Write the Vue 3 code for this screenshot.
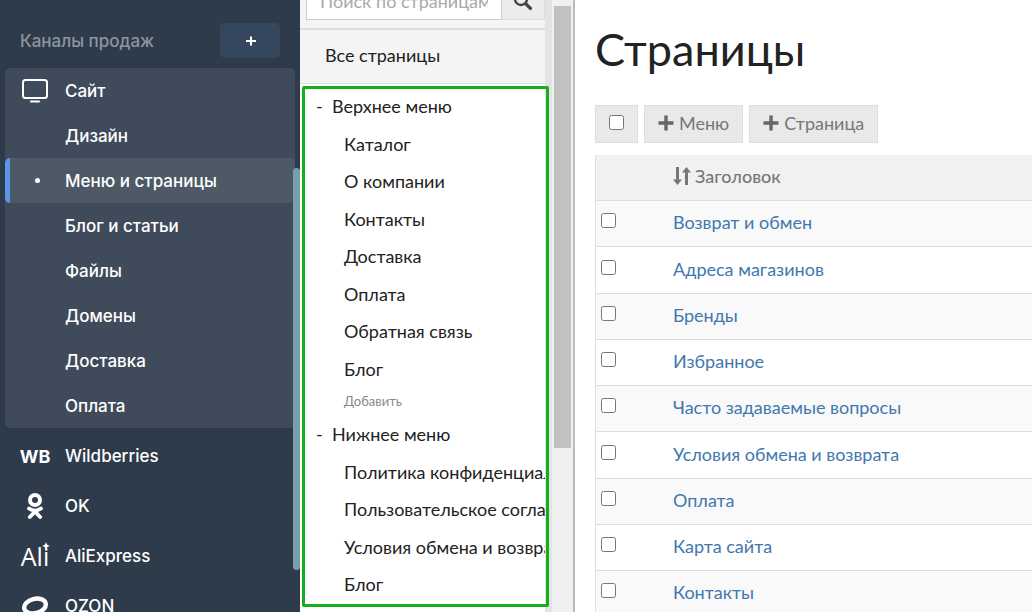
<script setup>
import { ref } from 'vue'

const query = ref('')
const siteItems = ['Дизайн', 'Меню и страницы', 'Блог и статьи', 'Файлы', 'Домены', 'Доставка', 'Оплата']
const activeItem = 'Меню и страницы'

const menus = [
  {
    title: 'Верхнее меню',
    items: ['Каталог', 'О компании', 'Контакты', 'Доставка', 'Оплата', 'Обратная связь', 'Блог'],
    canAdd: true,
  },
  {
    title: 'Нижнее меню',
    items: ['Политика конфиденциальности', 'Пользовательское соглашение', 'Условия обмена и возврата', 'Блог'],
    canAdd: false,
  },
]

const pages = [
  'Возврат и обмен',
  'Адреса магазинов',
  'Бренды',
  'Избранное',
  'Часто задаваемые вопросы',
  'Условия обмена и возврата',
  'Оплата',
  'Карта сайта',
  'Контакты',
]
</script>

<template>
  <div class="app">
    <nav class="sidebar" aria-label="Каналы продаж">
      <div class="sidebar-head">
        <span class="sidebar-title">Каналы продаж</span>
        <button class="add-channel" type="button" aria-label="Добавить канал">
          <svg width="10" height="10" viewBox="0 0 10 10"><path d="M5 0.5V9.5M0 5H10" stroke="#fff" stroke-width="2" /></svg>
        </button>
      </div>

      <div class="site-card">
        <a class="site-link" href="#">
          <span class="link-icon">
            <svg width="26" height="24" viewBox="0 0 26 24" fill="none" stroke="#fff">
              <rect x="1" y="1" width="24" height="18" rx="2.5" stroke-width="2" />
              <path d="M9 22.5H17" stroke-width="2" stroke-linecap="round" />
            </svg>
          </span>
          <span>Сайт</span>
        </a>
        <a v-for="item in siteItems" :key="item" href="#" class="site-link" :class="{ active: item === activeItem }">
          <span class="link-icon"><span v-if="item === activeItem" class="dot"></span></span>
          <span>{{ item }}</span>
        </a>
      </div>

      <div class="channels">
        <a class="channel" href="#">
          <span class="link-icon wb">WB</span>
          <span>Wildberries</span>
        </a>
        <a class="channel" href="#">
          <span class="link-icon">
            <svg width="16" height="26" viewBox="0 0 16 26" fill="none" stroke="#fff" stroke-linecap="round" stroke-linejoin="round">
              <circle cx="8" cy="7" r="5" stroke-width="4" />
              <path d="M2 15.5C5.5 18 10.5 18 14 15.5" stroke-width="3.8" />
              <path d="M2.8 24L8 18.7L13.2 24" stroke-width="3.8" />
            </svg>
          </span>
          <span>OK</span>
        </a>
        <a class="channel" href="#">
          <span class="link-icon ali">
            Ali
            <svg class="spark" width="8" height="8" viewBox="0 0 8 8"><path d="M4 0Q4.6 3.4 8 4Q4.6 4.6 4 8Q3.4 4.6 0 4Q3.4 3.4 4 0Z" fill="#fff" /></svg>
          </span>
          <span>AliExpress</span>
        </a>
        <a class="channel" href="#">
          <span class="link-icon">
            <svg width="28" height="20" viewBox="0 0 28 20"><ellipse cx="14" cy="10" rx="11" ry="7.2" transform="rotate(-14 14 10)" fill="none" stroke="#fff" stroke-width="4.4" /></svg>
          </span>
          <span>OZON</span>
        </a>
      </div>
      <div class="sidebar-thumb"></div>
    </nav>

    <aside class="tree-panel">
      <div class="tree">
        <form class="search" @submit.prevent>
          <input v-model="query" type="text" placeholder="Поиск по страницам" aria-label="Поиск по страницам" />
          <button type="submit" aria-label="Найти">
            <svg width="20" height="20" viewBox="0 0 20 20" fill="none" stroke="#444">
              <circle cx="8" cy="8" r="6" stroke-width="2.4" />
              <path d="M12.6 12.6L17.4 17.4" stroke-width="3.4" stroke-linecap="round" />
            </svg>
          </button>
        </form>
        <a class="all-pages" href="#">Все страницы</a>

        <div class="menus">
          <section v-for="menu in menus" :key="menu.title" class="menu">
            <button class="menu-title" type="button"><span class="toggle">-</span>{{ menu.title }}</button>
            <ul>
              <li v-for="item in menu.items" :key="item"><a href="#">{{ item }}</a></li>
            </ul>
            <a v-if="menu.canAdd" class="add-item" href="#">Добавить</a>
          </section>
        </div>
      </div>
      <div class="gutter"></div>
      <div class="scroll-track"><div class="scroll-thumb"></div></div>
      <div class="menus-frame"></div>
    </aside>

    <main class="content">
      <h1>Страницы</h1>
      <div class="toolbar">
        <label class="tool select-all"><input type="checkbox" aria-label="Выбрать все" /></label>
        <button v-for="label in ['Меню', 'Страница']" :key="label" class="tool" type="button">
          <svg width="16" height="16" viewBox="0 0 16 16"><path d="M8 0.5V15.5M0.5 8H15.5" stroke="#666" stroke-width="3.4" /></svg>
          {{ label }}
        </button>
      </div>
      <table>
        <thead>
          <tr>
            <th class="check-col"></th>
            <th>
              <span class="sort">
                <svg width="18" height="18" viewBox="0 0 18 18" fill="#777">
                  <path d="M3 0H6V12.5H9L4.5 18L0 12.5H3Z" />
                  <path d="M12 18H15V5.5H18L13.5 0L9 5.5H12Z" />
                </svg>
                Заголовок
              </span>
            </th>
          </tr>
        </thead>
        <tbody>
          <tr v-for="page in pages" :key="page">
            <td class="check-col"><input type="checkbox" :aria-label="page" /></td>
            <td><a href="#">{{ page }}</a></td>
          </tr>
        </tbody>
      </table>
    </main>
  </div>
</template>

<style>
body {
  margin: 0;
  overflow: hidden;
}
</style>

<style scoped>
* {
  box-sizing: border-box;
}

.app {
  display: flex;
  height: 100vh;
  overflow: hidden;
  background: #fff;
  font-family: Lato, "Liberation Sans", sans-serif;
  font-size: 18px;
  color: #222;
}

a {
  color: inherit;
  text-decoration: none;
}

button {
  margin: 0;
  font: inherit;
  cursor: pointer;
}

/* Sidebar */
.sidebar {
  position: relative;
  flex: 0 0 300px;
  padding: 23px 5px 0;
  overflow: hidden;
  background: #2d3b4b;
  color: #fff;
  font-family: Inter, Roboto, sans-serif;
  font-size: 17px;
  font-weight: 500;
}

.sidebar-head {
  display: flex;
  align-items: center;
  justify-content: space-between;
  height: 35px;
  margin: 0 15px 10px;
}

.sidebar-title {
  color: #8d969f;
}

.add-channel {
  display: flex;
  align-items: center;
  justify-content: center;
  width: 60px;
  height: 35px;
  padding: 0 0 0 2px;
  border: 0;
  border-radius: 5px;
  background: #34475c;
}

.site-card {
  border-radius: 5px;
  background: #3f4b5a;
}

.site-link,
.channel {
  display: flex;
  align-items: center;
  height: 45px;
  padding-left: 15px;
  white-space: nowrap;
}

.site-link.active {
  border-radius: 5px;
  background: linear-gradient(to right, #5b96e8 5px, #4d5966 5px);
}

.channel {
  height: 50px;
}

.channels {
  padding-top: 3px;
}

.link-icon {
  position: relative;
  display: flex;
  align-items: center;
  justify-content: center;
  width: 30px;
  margin-right: 15px;
}

.dot {
  width: 5px;
  height: 5px;
  margin-left: 5px;
  border-radius: 50%;
  background: #fff;
}

.wb {
  font-size: 18px;
  font-weight: 700;
}

.ali {
  font-family: "Open Sans", sans-serif;
  font-size: 25px;
  font-weight: 500;
  line-height: 30px;
}

.spark {
  position: absolute;
  top: 1px;
  right: 0;
}

.sidebar-thumb {
  position: absolute;
  top: 168px;
  right: 0;
  width: 7px;
  height: 402px;
  border-radius: 4px;
  background: #7a9eab;
}

/* Page tree */
.tree-panel {
  position: relative;
  display: flex;
  flex: 0 0 275px;
  min-width: 0;
  border-right: 2px solid #bbb;
}

.tree {
  flex: 1;
  min-width: 0;
  overflow: hidden;
}

.search {
  display: flex;
  height: 47px;
  margin-top: -19px;
  padding: 0 0 8px 6px;
  background: #f4f4f4;
}

.search input {
  flex: 1;
  min-width: 0;
  height: 39px;
  padding: 0 13px;
  border: 1px solid #ccc;
  background: #fff;
  font: inherit;
  color: #222;
}

.search input::placeholder {
  color: #aaa;
  opacity: 1;
}

.search button {
  display: flex;
  align-items: center;
  justify-content: center;
  width: 43px;
  height: 39px;
  padding: 0;
  border: 1px solid #ddd;
  border-left: 0;
  background: #ececec;
}

.all-pages {
  display: block;
  height: 56px;
  padding-left: 25px;
  border-top: 2px solid #ddd;
  border-bottom: 1px solid #ddd;
  background: #f4f4f4;
  line-height: 51px;
}

.menus {
  padding-top: 3px;
}

.menu-title {
  display: flex;
  align-items: center;
  height: 38px;
  padding: 0 0 0 16px;
  border: 0;
  background: none;
  color: inherit;
}

.toggle {
  width: 16px;
  text-align: left;
}

.menu ul {
  display: grid;
  grid-auto-rows: 37px 38px;
  align-items: center;
  margin: 0;
  padding: 0 0 0 44px;
  list-style: none;
  white-space: nowrap;
}

.add-item {
  display: block;
  height: 28px;
  padding-left: 44px;
  color: #888;
  font-size: 13px;
  line-height: 29px;
}

.gutter {
  flex: 0 0 7px;
  background: #e3e3e3;
}

.scroll-track {
  flex: 0 0 21px;
  padding: 6px 2px 0;
  background: #f0f0f0;
}

.scroll-thumb {
  height: 442px;
  background: #c1c1c1;
}

.menus-frame {
  position: absolute;
  top: 86px;
  left: 2px;
  width: 247px;
  height: 521px;
  border: 3px solid #14b01c;
  border-radius: 2px;
  pointer-events: none;
}

/* Page list */
.content {
  flex: 1;
  min-width: 0;
  padding: 19px 0 0 20px;
}

h1 {
  margin: 0 0 26px;
  font-size: 45px;
  font-weight: 400;
  line-height: 60px;
}

.toolbar {
  display: flex;
  gap: 6px;
  margin-bottom: 12px;
}

.tool {
  display: flex;
  align-items: center;
  gap: 5px;
  height: 38px;
  padding: 0 13px 3px;
  border: 1px solid #ddd;
  background: #e9e9e9;
  color: #777;
}

input[type="checkbox"] {
  display: block;
  width: 15px;
  height: 15px;
  margin: 0;
}

table {
  width: 100%;
  border-left: 1px solid #ddd;
  border-collapse: separate;
  border-spacing: 0;
}

th,
td {
  height: 46px;
  padding: 0 0 3px;
  border-bottom: 1px solid #ddd;
  text-align: left;
}

th {
  background: #f1f1f1;
  color: #777;
  font-weight: 500;
}

.sort {
  display: flex;
  align-items: center;
  gap: 4px;
}

.check-col {
  width: 77px;
  padding: 0 0 6px 5px;
}

tbody tr:nth-child(odd) {
  background: #f9f9f9;
}

tbody tr:nth-child(4n + 2) td {
  height: 47px;
}

td a {
  color: #4078ae;
}
</style>
